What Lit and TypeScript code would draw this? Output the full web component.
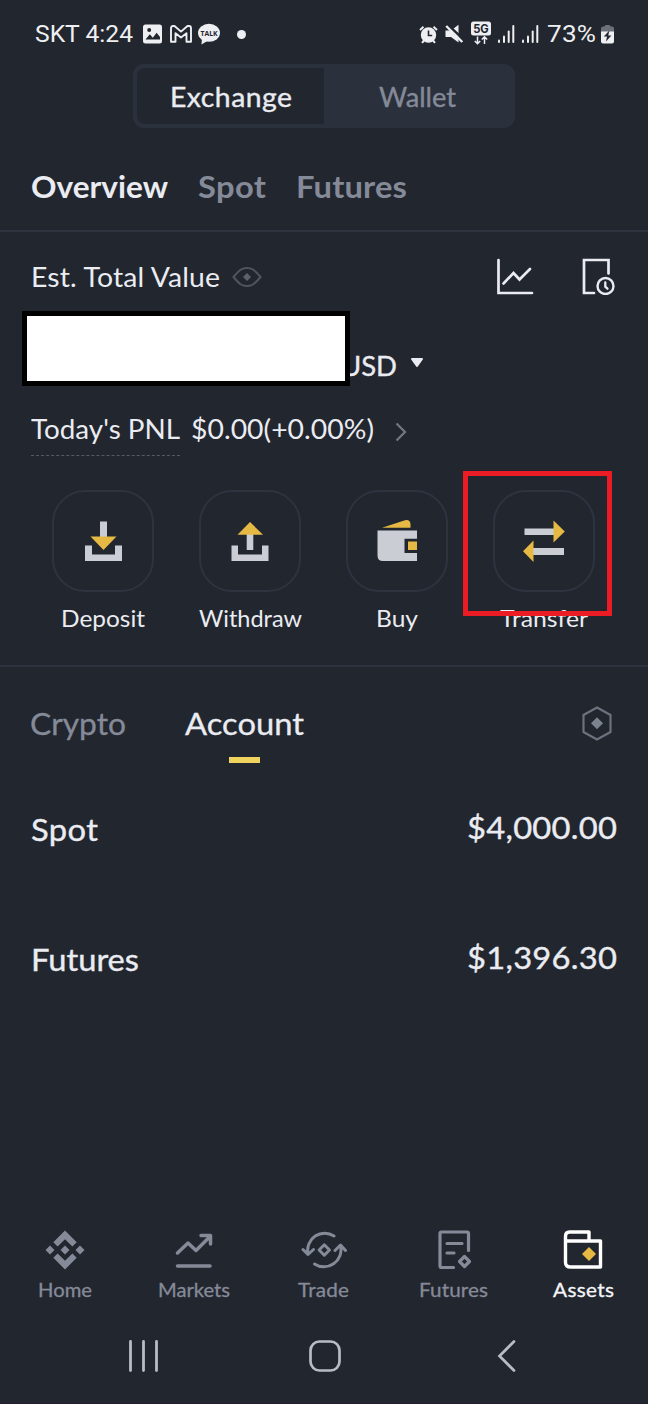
import { LitElement, html, css, svg } from "lit";
import { customElement, property } from "lit/decorators.js";

/** One line of text, widened and then tracked so that it fills `span` pixels. */
@customElement("fit-text")
class FitText extends LitElement {
  static styles = css`
    :host { display: block; white-space: nowrap; flex: none; }
    .t { display: inline-block; transform-origin: 0 50%; }
  `;
  @property({ type: Number }) span = 0;
  @property() text = "";
  updated() {
    const el = this.renderRoot.querySelector(".t") as HTMLElement;
    el.style.letterSpacing = "0px";
    el.style.transform = "none";
    const w = el.getBoundingClientRect().width;
    const scale = Math.min(Math.max(this.span / w, 0.95), 1.09);
    const gap = (this.span / scale - w) / (this.text.length - 1);
    el.style.letterSpacing = gap + "px";
    el.style.transform = `scaleX(${scale})`;
    this.style.width = this.span + "px";
  }
  render() {
    return html`<span class="t">${this.text}</span>`;
  }
}

const fit = (text: string, span: number, cls = "") =>
  html`<fit-text class=${cls} .text=${text} .span=${span}></fit-text>`;

const icon = (w: number, h: number, body: unknown, cls = "") =>
  html`<svg class=${cls} width=${w} height=${h} viewBox="0 0 ${w} ${h}" fill="none">${body}</svg>`;

@customElement("status-bar")
class StatusBar extends LitElement {
  static styles = css`
    :host { display: flex; align-items: center; justify-content: space-between; box-sizing: border-box;
      height: 64px; padding: 4px 34px 0 35px; color: #eeeff2; font: 400 24px/30px Roboto, sans-serif; }
    .left, .right { display: flex; align-items: center; }
    svg { display: block; flex: none; }
    .pic { margin-left: 10px; }
    .mail { margin-left: 8px; }
    .talk { margin-left: 5px; }
    .dot { width: 9px; height: 9px; border-radius: 50%; background: #eeeff2; margin-left: 17px; }
    .mute { margin-left: 7px; }
    .fiveg { margin-left: 7px; }
    .sig { margin-left: 6px; }
    .pct { margin-left: 8px; }
    .bat { margin-left: 5px; }
    .tiny { font: 700 7.5px "Open Sans", sans-serif; }
    .net { font: 700 11.5px Inter, sans-serif; }
  `;
  signal() {
    return icon(18, 20, svg`<g stroke="#eeeff2" stroke-width="2" stroke-linecap="round">
      <path d="M2 18v-1.5"/><path d="M7 18v-5.5"/><path d="M11.700 18V7.500"/><path d="M16.300 18V2"/></g>`, "sig");
  }
  render() {
    return html`
      <div class="left">
        ${fit("SKT 4:24", 98)}
        ${icon(19, 20, svg`<rect x="0" y=".5" width="19" height="19" rx="2.500" fill="#eeeff2"/>
          <circle cx="6.200" cy="6" r="2" fill="#22262f"/><path d="M2.500 15.500l4.300-5.200 3 3.400 3.800-5 3.400 4.200v2.600z" fill="#22262f"/>`, "pic")}
        ${icon(22, 18, svg`<path d="M1 16.800V3.200Q1 1 3 1h1.500L11 6.600 17.500 1H19q2 0 2 2.200v13.600h-4.500V8.200L11 12.400 5.500 8.200v8.600z" stroke="#eeeff2" stroke-width="1.900" stroke-linejoin="round"/>`, "mail")}
        ${icon(23, 22, svg`<ellipse cx="12" cy="9.800" rx="11" ry="9" fill="#eeeff2"/><path d="M5 16l-.6 5.500 6-3.500z" fill="#eeeff2"/>
          <text class="tiny" x="3.500" y="12.500" fill="#22262f" textLength="17" lengthAdjust="spacingAndGlyphs">TALK</text>`, "talk")}
        <div class="dot"></div>
      </div>
      <div class="right">
        ${icon(19, 19, svg`<circle cx="9.500" cy="10" r="7.700" fill="#eeeff2"/><path d="M1 5l3.500-3.300M18 5l-3.500-3.300" stroke="#eeeff2" stroke-width="1.900"/>
          <path d="M3 17.800l2-2.300M16 17.800l-2-2.300" stroke="#eeeff2" stroke-width="2"/><path d="M9.500 5.500V10.500h3.700" stroke="#22262f" stroke-width="1.600"/>`)}
        ${icon(19, 20, svg`<path d="M.5 6.500h5.500L13.500.8v17.700L6 13H.5z" fill="#eeeff2"/><path d="M2.500.5L19.500 16.500" stroke="#22262f" stroke-width="2.600"/>
          <path d="M1.200 2L17.300 18" stroke="#eeeff2" stroke-width="2.400"/>`, "mute")}
        ${icon(20, 26, svg`<rect x="0" y=".5" width="20" height="14" rx="2.500" fill="#eeeff2"/><text class="net" x="2.200" y="11.700" fill="#22262f" textLength="15.600" lengthAdjust="spacingAndGlyphs">5G</text>
          <path d="M6.500 15.500v7M3.800 20l2.700 2.700 2.700-2.700M13.500 23v-7M10.800 18.500l2.700-2.700 2.700 2.700" stroke="#eeeff2" stroke-width="1.500"/>`, "fiveg")}
        ${this.signal()}${this.signal()}
        ${fit("73%", 49, "pct")}
        ${icon(13, 20, svg`<path d="M3.500 2.500q0-1.500 1.500-1.500h3q1.500 0 1.500 1.500H11q2 0 2 2V8H0V4.500q0-2 2-2z" fill="#6d7079"/>
          <path d="M0 7.500h13v10q0 2-2 2H2q-2 0-2-2z" fill="#eeeff2"/><path d="M8.300 6.500l-5.500 6h3.200l-1 5 5.400-6H7.300z" fill="#22262f"/>`, "bat")}
      </div>`;
  }
}

@customElement("action-button")
class ActionButton extends LitElement {
  static styles = css`
    :host { display: flex; flex-direction: column; align-items: center; font-size: 23px; line-height: 28px; }
    .tile { box-sizing: border-box; width: 102px; height: 102px; border: 2px solid #2e3340; border-radius: 33px;
      display: grid; place-items: center; margin-bottom: 12px; }
    svg { display: block; }
  `;
  @property() kind = "";
  @property() label = "";
  @property({ type: Number }) span = 0;
  glyph() {
    const g = "#cacdd3", y = "#e6b944";
    switch (this.kind) {
      case "deposit":
        return svg`<path d="M18 1.500h7v16h-7z" fill=${g}/><path d="M3 25.500h7v9h23v-9h7V41H3z" fill=${g}/><path d="M8.500 16.500h26l-13 13.500z" fill=${y}/>`;
      case "withdraw":
        return svg`<path d="M17.700 14h6.600v16h-6.600z" fill=${g}/><path d="M2.500 25.500h6.500v9h24v-9h6.500V41h-37z" fill=${g}/><path d="M8.500 14.700h25.500L21 2z" fill=${y}/>`;
      case "buy":
        return svg`<path d="M1.500 10.500H41v8.300H28.500V33H41v8H7q-5.500 0-5.500-5.500z" fill=${g}/><path d="M6 7.700L29 .2q5.500-1 5.500 4.500v3z" fill=${y}/><path d="M32 21.500h9v8.500h-9z" fill=${y}/>`;
      default:
        return svg`<path d="M1.500 8.500h30V15h-30zM10 28h31v7H10z" fill=${g}/><path d="M30.500.5v22l11.300-11z" fill=${y}/><path d="M10.500 20.500V42L0 31.300z" fill=${y}/>`;
    }
  }
  render() {
    return html`<div class="tile">${icon(42, 43, this.glyph())}</div>${fit(this.label, this.span)}`;
  }
}

@customElement("tab-bar")
class TabBar extends LitElement {
  static styles = css`
    :host { display: grid; grid-template-columns: repeat(5, 1fr); height: 80px; color: #858a98; }
    .item { display: flex; flex-direction: column; align-items: center; font-size: 19px; -webkit-text-stroke: 0.3px currentColor; line-height: 24px; gap: 7px; }
    .on { color: #f4f5f8; }
    svg { display: block; }
  `;
  render() {
    const tab = (label: string, span: number, body: unknown, on = false) =>
      html`<div class="item ${on ? "on" : ""}">${icon(46, 42, body)}${fit(label, span)}</div>`;
    return html`
      ${tab("Home", 54, svg`<g fill="currentColor"><path d="M23 1.500l11.700 11.800-4.300 4.300L23 10.200l-7.400 7.400-4.300-4.300z"/>
        <path d="M23 40.500l11.700-11.800-4.300-4.300L23 31.800l-7.400-7.400-4.300 4.300z"/><path d="M23 16.500l4.500 4.500-4.500 4.500-4.500-4.500z"/>
        <path d="M8 16.500l4.500 4.500L8 25.500 3.500 21zM38 16.500l4.500 4.500-4.500 4.500-4.500-4.500z"/></g>`)}
      ${tab("Markets", 72, svg`<g stroke="currentColor" stroke-width="3.500" stroke-linecap="round" stroke-linejoin="round">
        <path d="M6.500 24L17 14l8 7.500L39.500 7M30 6.500h9.500V15M6.500 37h32.500"/></g>`)}
      ${tab("Trade", 51, svg`<g stroke="currentColor" stroke-width="3" stroke-linecap="round" stroke-linejoin="round">
        <path d="M33 7A17 17 0 0 0 7 24.500M2 20.500l5 5 5.500-5"/><path d="M13.500 35A17 17 0 0 0 39.500 17M34 21.500l5.500-5.500 5 5.500"/>
        <path d="M23.300 15.800l5.200 5.200-5.200 5.200-5.200-5.200z"/></g>`)}
      ${tab("Futures", 69, svg`<g stroke="currentColor" stroke-width="3.200" stroke-linecap="round" stroke-linejoin="round">
        <path d="M22.500 38.500h-12q-1.500 0-1.500-1.500V4.500Q9 3 10.500 3H36q1.500 0 1.500 1.500V21.500M16 14.500h15M16 24h7"/><path d="M33.500 27.500l5 5-5 5-5-5z"/></g>`)}
      ${tab("Assets", 61, svg`<g stroke="#fff" stroke-width="3.400" stroke-linejoin="round"><path d="M5.500 12V7.500q0-4.500 4-4.500h19.500v8.500M5.500 12h35v26H10.500q-5 0-5-4.500z"/></g>
        <path d="M29 18l7 7-7 7-7-7z" fill="#e6b944"/>`, true)}`;
  }
}

@customElement("app-root")
class AppRoot extends LitElement {
  static styles = css`
    :host { display: flex; flex-direction: column; position: relative; box-sizing: border-box; height: 1404px; overflow: hidden;
      background: #22262f; color: #eaecf1; font-family: Lato, sans-serif; font-size: 26px; line-height: 40px; border-bottom: 1px solid #241c2e; }
    svg { display: block; flex: none; }
    .dim { color: #858a98; }
    .segment { box-sizing: border-box; width: 382px; height: 64px; margin: 0 auto 0 133px; padding: 4px; border-radius: 11px;
      background: #2a303c; display: grid; grid-template-columns: 187px 187px; -webkit-text-stroke: 0.35px currentColor; }
    .seg { display: grid; place-items: center; padding-top: 1px; }
    .seg.on { background: #22262f; border-radius: 8px 0 0 8px; }
    .tabs { display: flex; gap: 30px; box-sizing: border-box; height: 104px; padding: 38px 31px 0; border-bottom: 2px solid #2e3340;
      font-size: 30px; font-weight: 700; }
    .total { display: flex; align-items: center; height: 37px; padding: 0 33px 0 31px; margin-top: 26px; }
    .eye { margin-left: 12px; }
    .chart { margin-left: auto; margin-right: 48px; }
    .balance { position: relative; display: flex; align-items: center; height: 75px; margin-top: 16px; padding: 34px 0 0 341px;
      box-sizing: border-box; -webkit-text-stroke: 0.35px currentColor; }
    .cover { position: absolute; left: 22px; top: 0; width: 328px; height: 75px; box-sizing: border-box; background: #fff; border: 5px solid #000; }
    .caret { margin: -5px 0 0 13px; }
    .pnl { display: flex; margin: 23px 0 0 31px; height: 47px; }
    .term { border-bottom: 1px dashed #555a66; height: 46px; margin-right: 11px; }
    .more { margin: 13px 0 0 21px; }
    .actions { display: grid; grid-template-columns: repeat(4, 1fr); padding: 0 31px 0 30px; margin-top: 34px; height: 175px;
      border-bottom: 2px solid #2e3340; }
    .marked { position: relative; }
    .mark { position: absolute; left: -7px; top: -19px; width: 149px; height: 145px; box-sizing: border-box; border: 5px solid #ec1c24; }
    .subtabs { display: flex; padding: 36px 36px 0 30px; font-size: 30px; height: 60px; -webkit-text-stroke: 0.3px currentColor; align-items: flex-start; }
    .account { margin-left: 59px; display: flex; flex-direction: column; align-items: center; }
    .bar { width: 31px; height: 6px; background: #f0d35f; margin-top: 14px; }
    .hex { margin-left: auto; margin-top: 3px; }
    .row { display: flex; justify-content: space-between; padding: 0 31px; font-size: 30px; -webkit-text-stroke: 0.35px currentColor; height: 130px; }
    .rows { margin-top: 46px; }
    .value { margin-top: -2px; }
    tab-bar { margin-top: auto; }
    .system { display: flex; height: 94px; box-sizing: border-box; padding: 31px 0 0 128px; }
    .home { margin-left: 150px; }
    .back { margin-left: 156px; }
  `;
  render() {
    return html`
      <status-bar></status-bar>
      <div class="segment">
        <div class="seg on">${fit("Exchange", 122)}</div>
        <div class="seg dim">${fit("Wallet", 77)}</div>
      </div>
      <div class="tabs">
        ${fit("Overview", 137)}${fit("Spot", 68, "dim")}${fit("Futures", 111, "dim")}
      </div>
      <div class="total">
        ${fit("Est. Total Value", 189)}
        ${icon(30, 22, svg`<path d="M1.500 11Q6 5.500 9 3.500 11.500 2 15 2t6 1.500Q24 5.500 28.500 11 24 16.500 21 18.500 18.500 20 15 20t-6-1.500Q6 16.500 1.500 11z" stroke="#50555f" stroke-width="2"/>
          <path d="M15 7l4 4-4 4-4-4z" fill="#5c616c"/>`, "eye")}
        ${icon(38, 37, svg`<path d="M2.500 2v33H36" stroke="#eaecf1" stroke-width="2.700" stroke-linecap="round"/>
          <path d="M7.500 25.500L17.500 15l6 6.500L34 11" stroke="#eaecf1" stroke-width="2.600" stroke-linecap="round"/>`, "chart")}
        ${icon(33, 37, svg`<path d="M12 35H2V2h24.500v13.500" stroke="#eaecf1" stroke-width="2.700" stroke-linecap="round"/>
          <circle cx="23.500" cy="28" r="8" stroke="#eaecf1" stroke-width="2.400"/><path d="M23.300 24.500v4.200l2.200 2" stroke="#eaecf1" stroke-width="2.300" stroke-linecap="round"/>`)}
      </div>
      <div class="balance">
        ${fit("USD", 56)}
        ${icon(14, 10, svg`<path d="M2 1h10l-5 7z" fill="#eaecf1" stroke="#eaecf1" stroke-width="2" stroke-linejoin="round"/>`, "caret")}
        <div class="cover"></div>
      </div>
      <div class="pnl">
        <div class="term">${fit("Today's PNL", 149)}</div>
        ${fit("$0.00(+0.00%)", 183)}
        ${icon(12, 20, svg`<path d="M1.500 1.500L10 10l-8.500 8.500" stroke="#737885" stroke-width="2.200"/>`, "more")}
      </div>
      <div class="actions">
        <action-button kind="deposit" label="Deposit" .span=${84}></action-button>
        <action-button kind="withdraw" label="Withdraw" .span=${103}></action-button>
        <action-button kind="buy" label="Buy" .span=${42}></action-button>
        <div class="marked">
          <action-button kind="transfer" label="Transfer" .span=${88}></action-button>
          <div class="mark"></div>
        </div>
      </div>
      <div class="subtabs">
        ${fit("Crypto", 96, "dim")}
        <div class="account">${fit("Account", 119)}<div class="bar"></div></div>
        ${icon(30, 35, svg`<path d="M15 1.500L28.500 9v17L15 33.500 1.500 26V9z" stroke="#6c717d" stroke-width="2.200"/><path d="M15 11.300l6 6-6 6-6-6z" fill="#7d828f"/>`, "hex")}
      </div>
      <div class="rows">
        <div class="row">${fit("Spot", 67)}${fit("$4,000.00", 150, "value")}</div>
        <div class="row">${fit("Futures", 108)}${fit("$1,396.30", 150, "value")}</div>
      </div>
      <tab-bar></tab-bar>
      <div class="system">
        ${icon(31, 32, svg`<path d="M2.500 1.500v29M15.500 1.500v29M28.500 1.500v29" stroke="#b9bcc3" stroke-width="2.800" stroke-linecap="round"/>`)}
        ${icon(32, 32, svg`<rect x="1.500" y="1.500" width="29" height="29" rx="9" stroke="#b9bcc3" stroke-width="2.700"/>`, "home")}
        ${icon(20, 32, svg`<path d="M17 1.500L2.500 16 17 30.500" stroke="#b9bcc3" stroke-width="2.700" stroke-linecap="round"/>`, "back")}
      </div>`;
  }
}
